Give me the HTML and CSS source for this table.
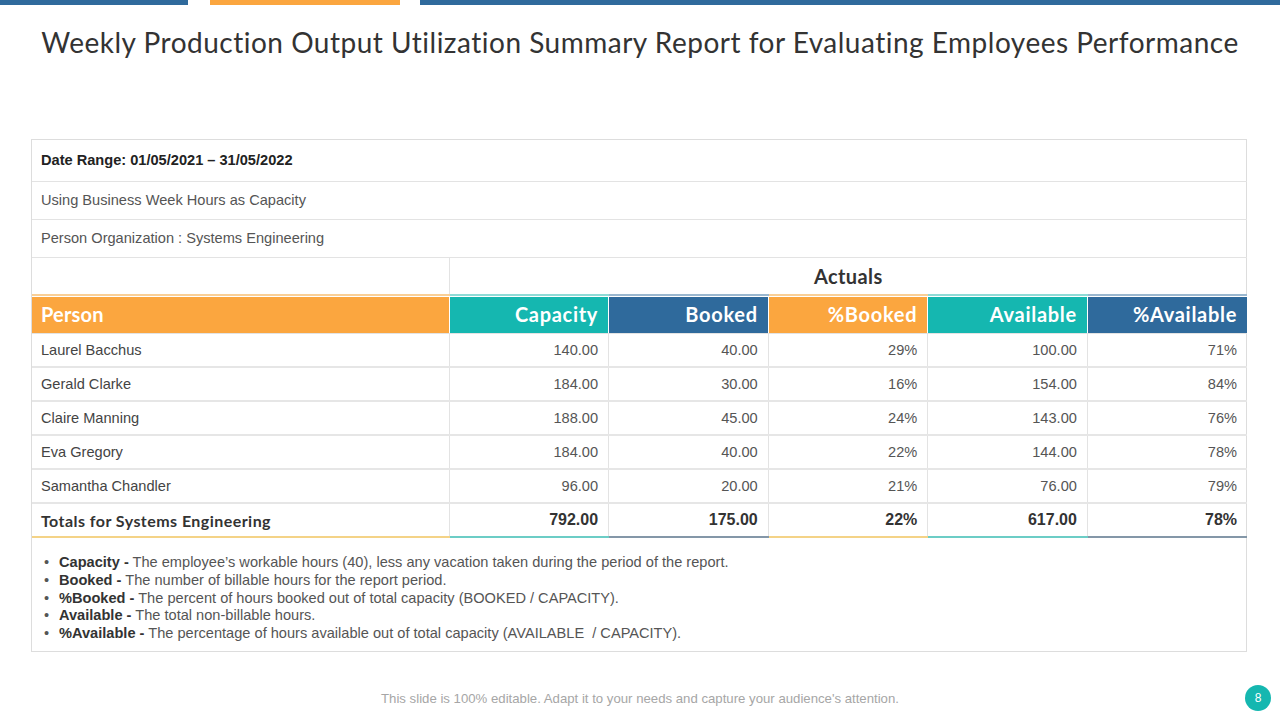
FILE: index.html
```html
<!DOCTYPE html>
<html lang="en">
<head>
<meta charset="utf-8">
<title>Weekly Production Output Utilization Summary Report</title>
<link rel="stylesheet" href="styles.css">
</head>
<body>
<div class="slide">
  <div class="topbars">
    <span class="bar bar-blue-a"></span>
    <span class="bar bar-orange"></span>
    <span class="bar bar-blue-b"></span>
  </div>
  <h1 class="title">Weekly Production Output Utilization Summary Report for Evaluating Employees Performance</h1>

  <div class="report">
    <table class="grid">
      <colgroup>
        <col class="c-person"><col class="c-num"><col class="c-num"><col class="c-num"><col class="c-num"><col class="c-num">
      </colgroup>
      <tbody>
        <tr class="info info-first"><td colspan="6"><strong>Date Range: 01/05/2021 – 31/05/2022</strong></td></tr>
        <tr class="info"><td colspan="6">Using Business Week Hours as Capacity</td></tr>
        <tr class="info"><td colspan="6">Person Organization : Systems Engineering</td></tr>
        <tr class="actuals"><td class="blank"></td><td colspan="5" class="actuals-label">Actuals</td></tr>
        <tr class="head">
          <th class="h-orange h-left">Person</th>
          <th class="h-teal">Capacity</th>
          <th class="h-blue">Booked</th>
          <th class="h-orange">%Booked</th>
          <th class="h-teal">Available</th>
          <th class="h-blue">%Available</th>
        </tr>
        <tr class="row"><td class="name">Laurel Bacchus</td><td>140.00</td><td>40.00</td><td>29%</td><td>100.00</td><td>71%</td></tr>
        <tr class="row"><td class="name">Gerald Clarke</td><td>184.00</td><td>30.00</td><td>16%</td><td>154.00</td><td>84%</td></tr>
        <tr class="row"><td class="name">Claire Manning</td><td>188.00</td><td>45.00</td><td>24%</td><td>143.00</td><td>76%</td></tr>
        <tr class="row"><td class="name">Eva Gregory</td><td>184.00</td><td>40.00</td><td>22%</td><td>144.00</td><td>78%</td></tr>
        <tr class="row"><td class="name">Samantha Chandler</td><td>96.00</td><td>20.00</td><td>21%</td><td>76.00</td><td>79%</td></tr>
        <tr class="totals">
          <td class="name t-orange">Totals for Systems Engineering</td>
          <td class="t-teal">792.00</td>
          <td class="t-blue">175.00</td>
          <td class="t-orange">22%</td>
          <td class="t-teal">617.00</td>
          <td class="t-blue">78%</td>
        </tr>
      </tbody>
    </table>
    <ul class="notes">
      <li><b>Capacity -</b> The employee’s workable hours (40), less any vacation taken during the period of the report.</li>
      <li><b>Booked -</b> The number of billable hours for the report period.</li>
      <li><b>%Booked -</b> The percent of hours booked out of total capacity (BOOKED / CAPACITY).</li>
      <li><b>Available -</b> The total non-billable hours.</li>
      <li><b>%Available -</b> The percentage of hours available out of total capacity (AVAILABLE&nbsp; / CAPACITY).</li>
    </ul>
  </div>

  <footer class="footer">
    <p class="footnote">This slide is 100% editable. Adapt it to your needs and capture your audience's attention.</p>
    <span class="page-badge">8</span>
  </footer>
</div>
</body>
</html>
```

FILE: styles.css
```css
* { box-sizing: border-box; }

html, body {
  margin: 0;
  padding: 0;
  background: #ffffff;
}

.slide {
  width: 1280px;
  height: 720px;
  overflow: hidden;
  position: relative;
  background: #ffffff;
  font-family: "Liberation Sans", Arial, sans-serif;
  color: #555555;
}

/* top decorative bars */
.topbars {
  display: flex;
  height: 5px;
}
.bar { display: block; height: 5px; }
.bar-blue-a { width: 188px; background: #2f6a9c; }
.bar-orange { width: 190px; margin-left: 22px; background: #fba63f; }
.bar-blue-b { flex: 1; margin-left: 20px; background: #2f6a9c; }

.title {
  margin: 22px 0 0 0;
  text-align: center;
  font-family: "Lato", "DejaVu Sans", sans-serif;
  font-weight: 400;
  font-size: 28px;
  line-height: 30px;
  color: #333333;
  letter-spacing: 0.5px;
}

/* report box */
.report {
  margin: 82px 33px 0 31px;
  border: 1px solid #dddddd;
}

.grid {
  width: 100%;
  border-collapse: collapse;
  table-layout: fixed;
}
.c-person { width: 417px; }
.c-num { width: 159.6px; }

.grid td, .grid th {
  padding: 0 10px;
  white-space: nowrap;
}

.info td {
  font-size: 14.6px;
  height: 38px;
  color: #555555;
  border-bottom: 1px solid #e3e3e3;
  padding-left: 9px;
}
.info-first td {
  height: 41px;
  color: #222222;
}
.info-first strong { font-weight: 700; }

.actuals td {
  height: 38px;
}
.actuals .blank {
  border-right: 1px solid #e3e3e3;
}
.actuals-label {
  text-align: center;
  font-family: "Lato", "DejaVu Sans", sans-serif;
  font-weight: 700;
  font-size: 20px;
  letter-spacing: 0.4px;
  color: #333333;
}

.head th {
  height: 38px;
  color: #ffffff;
  font-family: "Lato", "DejaVu Sans", sans-serif;
  font-weight: 700;
  font-size: 20px;
  letter-spacing: 0.7px;
  text-align: right;
  padding-right: 10px;
  border-left: 1px solid #ffffff;
  border-bottom: 1px solid #e3e3e3;
}
.head th.h-left { text-align: left; padding-left: 9px; border-left: none; letter-spacing: 0.2px; }
.h-orange { background: #fba63f; border-top: 2px solid #f9cf96; box-shadow: inset 0 1px 0 #ffffff; }
.h-teal   { background: #15b7b0; border-top: 2px solid #8edbd6; box-shadow: inset 0 1px 0 #ffffff; }
.h-blue   { background: #2f6a9c; border-top: 2px solid #9ab7cf; box-shadow: inset 0 1px 0 #ffffff; }

.row td {
  height: 34px;
  font-size: 14.6px;
  color: #555555;
  text-align: right;
  border-bottom: 2px solid #e6e6e6;
  border-left: 1px solid #e3e3e3;
}
.row td.name {
  text-align: left;
  padding-left: 9px;
  border-left: none;
  color: #444444;
}

.totals td {
  height: 34px;
  font-size: 16px;
  font-weight: 700;
  color: #333333;
  text-align: right;
  border-left: 1px solid #e3e3e3;
}
.totals td.name {
  text-align: left;
  padding-left: 9px;
  border-left: none;
  font-family: "Lato", "DejaVu Sans", sans-serif;
  font-size: 16px;
  letter-spacing: 0.45px;
}
.t-orange { border-bottom: 2px solid #f4d387; }
.t-teal   { border-bottom: 2px solid #6ccdc6; }
.t-blue   { border-bottom: 2px solid #8497a8; }

.notes {
  margin: 0;
  padding: 16px 0 8px 27px;
  list-style: none;
  font-size: 14.6px;
  line-height: 17.8px;
  color: #555555;
}
.notes li {
  position: relative;
}
.notes li::before {
  content: "•";
  position: absolute;
  left: -15px;
  color: #555555;
}
.notes b { color: #333333; }

/* footer */
.footer {
  position: absolute;
  left: 0;
  right: 0;
  bottom: 0;
  height: 44px;
  display: flex;
  align-items: center;
  justify-content: center;
}
.footnote {
  margin: 0;
  font-size: 13.2px;
  color: #a6a6a6;
}
.page-badge {
  position: absolute;
  right: 9px;
  top: 9px;
  width: 26px;
  height: 26px;
  border-radius: 50%;
  background: #15b7b0;
  color: #ffffff;
  font-size: 12px;
  display: flex;
  align-items: center;
  justify-content: center;
}
```
